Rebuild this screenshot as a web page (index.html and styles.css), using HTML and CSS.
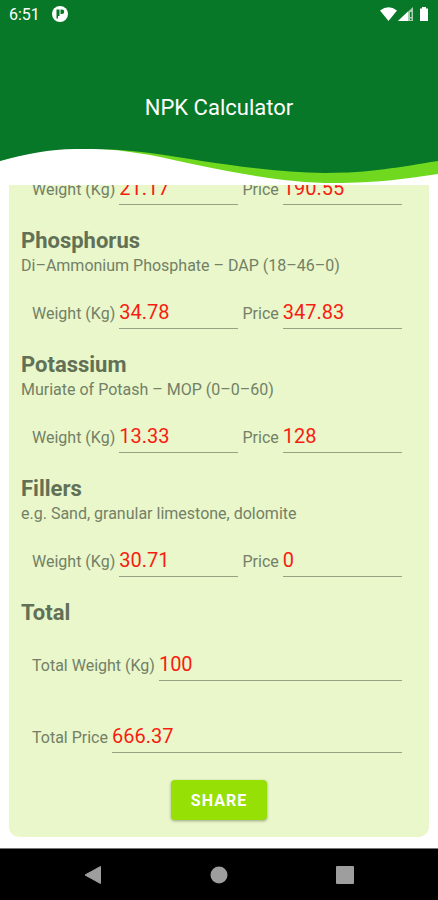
FILE: index.html
```html
<!DOCTYPE html>
<html lang="en">
<head>
<meta charset="utf-8">
<meta name="viewport" content="width=device-width, initial-scale=1">
<title>NPK Calculator</title>
<link rel="stylesheet" href="styles.css">
</head>
<body>
<header class="header">
  <div class="status">
    <span>6:51</span>
    <svg class="status-app" width="16" height="16" viewBox="0 0 16 16" aria-hidden="true">
      <circle cx="8" cy="8" r="8" fill="#fff"/>
      <path d="M4.500 3.500h3v6.500h-1.500v2.500h-1.500zM8.500 3.500h1.500a2 2 0 0 1 0 4.500h-1.500z" fill="#077828"/>
    </svg>
    <svg class="status-icons" width="50" height="16" viewBox="0 0 50 16" aria-hidden="true">
      <path d="M0 4.500Q8.500-2 17 4.500L8.500 15z" fill="#fff"/>
      <path d="M18 15L33 1v14z" fill="#a9d0b4"/>
      <path d="M18 15L28 5.600V15z" fill="#fff"/>
      <path d="M30 6h1.500v5H30zM30 12.500h1.500V14H30z" fill="#077828"/>
      <path d="M40 2.500h2V1h4v1.500h2V15h-8z" fill="#fff"/>
    </svg>
  </div>
  <h1 class="title">NPK Calculator</h1>
</header>
<svg class="wave" viewBox="0 0 438 40" preserveAspectRatio="none" aria-hidden="true">
  <path d="M0 0H438V29C405 34 375 38 335 38C270 38 200 20 150 10C120 5 100 3 75 3C50 3 25 8 0 16z" fill="#6fd81f"/>
  <path d="M0 0H438V16C400 22 370 28 325 28C270 28 205 16 150 8C120 4 100 4 75 4C50 4 25 9 0 16z" fill="#077828"/>
</svg>
<main class="page">
  <form class="card">
    <section class="group">
      <div class="row">
        <label for="n-weight">Weight (Kg)</label><input id="n-weight" type="text" value="21.17">
        <label for="n-price">Price</label><input id="n-price" type="text" value="190.55">
      </div>
    </section>
    <section class="group">
      <h2 class="group-title">Phosphorus</h2>
      <p class="group-note">Di–Ammonium Phosphate – DAP (18–46–0)</p>
      <div class="row">
        <label for="p-weight">Weight (Kg)</label><input id="p-weight" type="text" value="34.78">
        <label for="p-price">Price</label><input id="p-price" type="text" value="347.83">
      </div>
    </section>
    <section class="group">
      <h2 class="group-title">Potassium</h2>
      <p class="group-note">Muriate of Potash – MOP (0–0–60)</p>
      <div class="row">
        <label for="k-weight">Weight (Kg)</label><input id="k-weight" type="text" value="13.33">
        <label for="k-price">Price</label><input id="k-price" type="text" value="128">
      </div>
    </section>
    <section class="group">
      <h2 class="group-title">Fillers</h2>
      <p class="group-note">e.g. Sand, granular limestone, dolomite</p>
      <div class="row">
        <label for="f-weight">Weight (Kg)</label><input id="f-weight" type="text" value="30.71">
        <label for="f-price">Price</label><input id="f-price" type="text" value="0">
      </div>
    </section>
    <section class="totals">
      <h2 class="group-title">Total</h2>
      <div class="row">
        <label for="t-weight">Total Weight (Kg)</label><input id="t-weight" type="text" value="100">
      </div>
      <div class="row">
        <label for="t-price">Total Price</label><input id="t-price" type="text" value="666.37">
      </div>
    </section>
    <button class="share" type="button">SHARE</button>
  </form>
</main>
<nav class="navbar" aria-label="System">
  <button type="button" aria-label="Back"><svg width="18" height="20" viewBox="0 0 18 20"><path d="M1 10L16.500 1.500v17z" fill="#9e9e9e" stroke="#9e9e9e" stroke-linejoin="round"/></svg></button>
  <button type="button" aria-label="Home"><svg width="18" height="18" viewBox="0 0 18 18"><circle cx="9" cy="9" r="8.500" fill="#9e9e9e"/></svg></button>
  <button type="button" aria-label="Recent"><svg width="18" height="18" viewBox="0 0 18 18"><rect width="18" height="18" rx="1" fill="#9e9e9e"/></svg></button>
</nav>
</body>
</html>
```
FILE: styles.css
```css
* {
  box-sizing: border-box;
}

body {
  margin: 0;
  height: 100vh;
  display: flex;
  flex-direction: column;
  background: #fff;
  color: #738067;
  font-family: Roboto, "Liberation Sans", sans-serif;
  font-size: 16px;
}

.header {
  flex: none;
  height: 145px;
  background: #077828;
  color: #fff;
}

.status {
  display: flex;
  align-items: center;
  height: 28px;
  padding: 0 8px 0 9px;
}

.status-app {
  margin-left: 12px;
}

.status-icons {
  margin-left: auto;
}

.title {
  margin: 64px 0 0;
  font-size: 22px;
  font-weight: 400;
  line-height: 32px;
  text-align: center;
}

.wave {
  flex: none;
  display: block;
  width: 100%;
  height: 40px;
}

.page {
  flex: 1;
  min-height: 0;
  display: flex;
  padding: 0 9px 11px;
}

.card {
  flex: 1;
  min-width: 0;
  display: flex;
  flex-direction: column;
  justify-content: flex-end;
  overflow: hidden;
  padding: 0 12px 17px;
  border-radius: 0 0 10px 10px;
  background: #e9f7ca;
}

.group {
  flex: none;
  padding-bottom: 22px;
}

.group-title {
  margin: 0;
  color: #627056;
  font-size: 22px;
  font-weight: 700;
  line-height: 28px;
}

.group-note {
  margin: 0 0 16px;
  line-height: 22px;
}

.row {
  display: flex;
  align-items: center;
  gap: 4px;
  height: 36px;
  padding: 0 15px 0 11px;
}

.row label {
  padding-top: 4px;
  white-space: nowrap;
}

.row input {
  flex: 1;
  width: 0;
  height: 36px;
  padding: 2px 0 0;
  border: 0;
  border-bottom: 1px solid #96a283;
  border-radius: 0;
  outline: 0;
  background: transparent;
  color: #f81d12;
  font: inherit;
  font-size: 20px;
}

.totals {
  flex: none;
  display: flex;
  flex-direction: column;
}

.totals .row {
  margin-top: 18px;
}

.totals .row + .row {
  margin-top: 36px;
}

.share {
  flex: none;
  align-self: center;
  height: 40px;
  margin-top: 27px;
  padding: 0 20px;
  border: 0;
  border-radius: 4px;
  background: #96e005;
  box-shadow: 0 1px 3px rgba(0, 0, 0, 0.35);
  color: #fff;
  font: inherit;
  font-weight: 700;
  letter-spacing: 1px;
}

.navbar {
  flex: none;
  display: flex;
  justify-content: center;
  gap: 90px;
  height: 52px;
  border-top: 1px solid #777;
  background: #000;
}

.navbar button {
  display: flex;
  align-items: center;
  justify-content: center;
  width: 36px;
  padding: 0;
  border: 0;
  background: none;
}
```
